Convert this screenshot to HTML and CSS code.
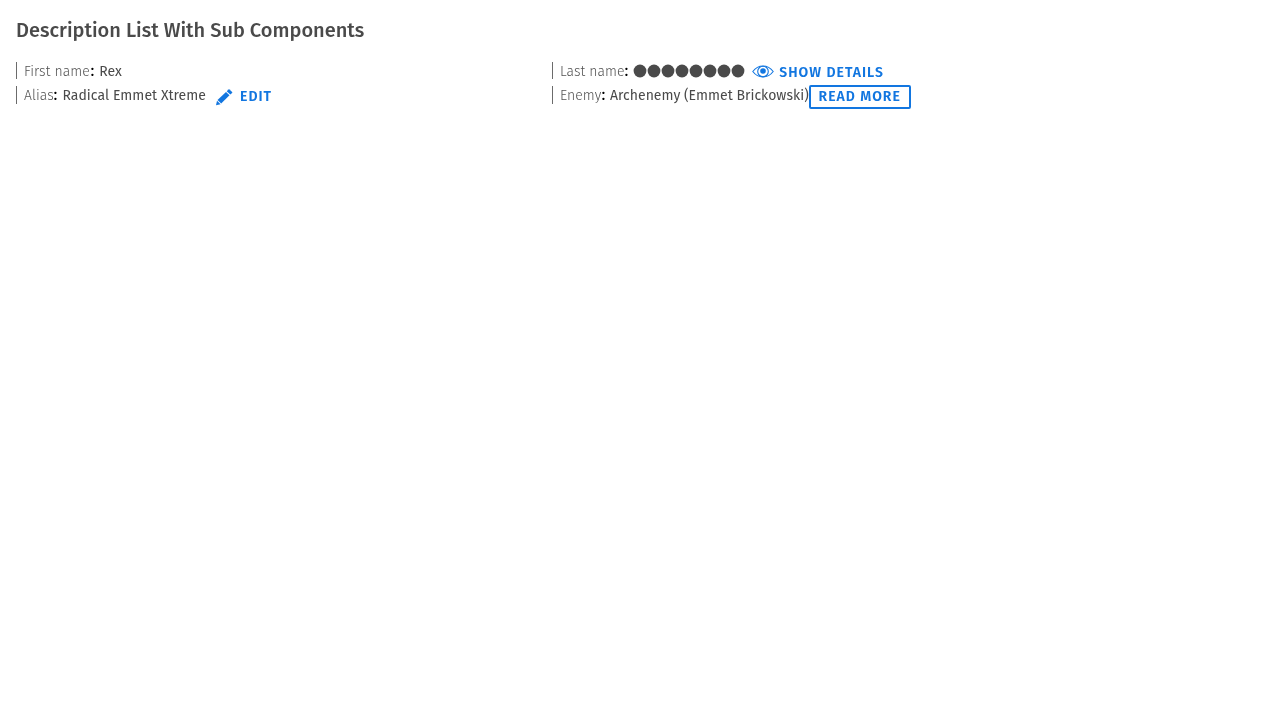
FILE: index.html
```html
<!DOCTYPE html>
<html lang="en">
<head>
<meta charset="utf-8">
<title>Description List With Sub Components</title>
<link rel="stylesheet" href="styles.css">
</head>
<body>
<h1 class="title">Description List With Sub Components</h1>
<dl class="list">
  <div class="item">
    <dt class="term first-name">First name</dt><span class="colon">:</span>
    <dd class="value rex">Rex</dd>
  </div>
  <div class="item">
    <dt class="term last-name">Last name</dt><span class="colon">:</span>
    <dd class="value secret"><svg width="112" height="14" viewBox="0 0 112 14" fill="#4a4a4a"><circle cx="7" cy="7" r="6.400"/><circle cx="21" cy="7" r="6.400"/><circle cx="35" cy="7" r="6.400"/><circle cx="49" cy="7" r="6.400"/><circle cx="63" cy="7" r="6.400"/><circle cx="77" cy="7" r="6.400"/><circle cx="91" cy="7" r="6.400"/><circle cx="105" cy="7" r="6.400"/></svg></dd>
    <button class="action show"><svg class="eye" width="22" height="14" viewBox="0 0 22 14" fill="none" stroke="#1276e0" stroke-width="1.100"><path d="M.8 6.500C3.500 2.900 7 1 11 1S18.500 2.900 21.200 6.500C18.500 10.100 15 12 11 12S3.500 10.100.8 6.500Z"/><circle cx="11" cy="6.500" r="5.300"/><circle cx="11" cy="6" r="2.800" fill="#1276e0" stroke="none"/></svg><span class="label show-label">SHOW DETAILS</span></button>
  </div>
  <div class="item tall">
    <dt class="term alias">Alias</dt><span class="colon">:</span>
    <dd class="value xtreme">Radical Emmet Xtreme</dd>
    <button class="action edit"><svg class="pencil" width="17" height="17" viewBox="0 0 17 17" fill="#1276e0"><path d="M0 16.200 1 11.700 4.600 15.200Z"/><path d="M1.500 10.900 10 2.900 13.500 6.300 5.200 14.500Z"/><path d="M10.700 2.200 12.500.5Q13 .1 13.500.5L16.100 3Q16.500 3.500 16.100 4L14.300 5.600Z"/></svg><span class="label edit-label">EDIT</span></button>
  </div>
  <div class="item tall">
    <dt class="term enemy">Enemy</dt><span class="colon">:</span>
    <dd class="value arch">Archenemy (Emmet Brickowski)</dd>
    <button class="action more"><span class="label more-label">READ MORE</span></button>
  </div>
</dl>
</body>
</html>
```
FILE: styles.css
```css
body {
  margin: 0;
  padding: 16px;
  color: #4a4a4a;
  font: 14px/18px "Fira Sans", "Noto Sans", sans-serif;
}
.title {
  margin: 0;
  font-size: 20px;
  line-height: 28px;
  font-weight: 500;
  white-space: nowrap;
  will-change: transform;
}
.list {
  display: grid;
  grid-template-columns: 536px 1fr;
  grid-auto-rows: 24px;
  margin: 15px 0 0;
  will-change: transform;
}
.item {
  display: flex;
  align-items: flex-start;
  white-space: nowrap;
}
.item::before {
  content: "";
  width: 1px;
  height: 17px;
  margin: 3px 7px 0 0;
  background: #6b6b6b;
}
.tall::before { height: 18px; }
.term, .colon, .value {
  margin: 0;
  padding-top: 4px;
}
.term { font-weight: 300; letter-spacing: 0.04px; color: #525252; }
.value { letter-spacing: 0.03px; }
.first-name { width: 66.800px; }
.last-name { width: 65px; }
.alias { width: 30px; }
.enemy { width: 42px; }
.colon { width: 8px; padding-top: 3px; font-size: 16px; font-weight: 400; color: #000; text-indent: -0.4px; }
.rex { padding-left: 0.4px; }
.secret { width: 112px; padding-top: 5px; padding-left: 0.4px; }
.secret svg { display: block; }
.xtreme { width: 143.600px; padding-left: 0.4px; letter-spacing: 0.05px; }
.arch { width: 199px; letter-spacing: 0.02px; }
.action {
  display: flex;
  align-items: center;
  box-sizing: border-box;
  height: 24px;
  margin: 2px 0 0;
  padding: 0;
  border: 0;
  background: none;
  color: #1276e0;
  font: 600 14px/18px "Fira Sans", "Noto Sans", sans-serif;
}
.show { margin-left: 6.600px; gap: 5.300px; }
.eye { margin-top: -2px; }
.edit { margin-left: 10px; gap: 7px; }
.more {
  width: 102px;
  padding: 0 0 0 7.600px;
  border: 2px solid #1276e0;
  border-radius: 2px;
}
.label { letter-spacing: 1px; }
```
